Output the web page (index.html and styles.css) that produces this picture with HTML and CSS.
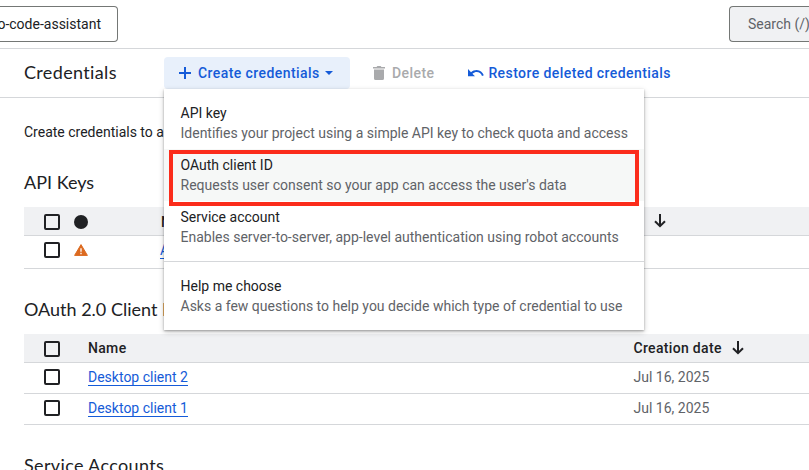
FILE: index.html
```html
<!DOCTYPE html>
<html lang="en">
<head>
<meta charset="utf-8">
<title>Credentials</title>
<link rel="stylesheet" href="styles.css">
</head>
<body>
<header class="topbar">
  <div class="project"><span class="project-name">o-code-assistant</span></div>
  <div class="search"><span class="search-label">Search (/)</span></div>
</header>
<div class="toolbar">
  <h1 class="title">Credentials</h1>
  <div class="create">
    <button class="create-btn">
      <svg width="14" height="14" viewBox="0 0 14 14"><path d="M7 1v12M1 7h12" stroke="currentColor" stroke-width="2"/></svg>
      <span>Create credentials</span>
      <svg class="caret" width="8" height="4" viewBox="0 0 8 4"><path d="M0 0h8L4 4z" fill="currentColor"/></svg>
    </button>
    <div class="menu">
      <div class="item"><div class="name">API key</div><div class="desc">Identifies your project using a simple API key to check quota and access</div></div>
      <div class="item active"><div class="name">OAuth client ID</div><div class="desc">Requests user consent so your app can access the user's data</div><div class="marker"></div></div>
      <div class="item"><div class="name">Service account</div><div class="desc">Enables server-to-server, app-level authentication using robot accounts</div></div>
      <div class="divider"></div>
      <div class="item"><div class="name">Help me choose</div><div class="desc">Asks a few questions to help you decide which type of credential to use</div></div>
    </div>
  </div>
  <button class="delete">
    <svg width="12" height="14" viewBox="0 0 12 14"><path d="M0 1h3.500L4.400 0h3.200l.9 1H12v1.600H0zM1 3.600h10v8.800q0 1.600-1.600 1.600H2.600Q1 14 1 12.400z" fill="currentColor"/></svg>
    <span>Delete</span>
  </button>
  <button class="restore">
    <svg width="16" height="8" viewBox="0 0 16 8"><path d="M0 0v7.200h7L4.400 4.700C6 3.500 7.200 3 8.700 3c2.400 0 4.500 1.500 5.300 3.900l1.800-.6C14.700 3.200 12 1 8.700 1 6.500 1 4.600 1.900 3 3.200z" fill="currentColor"/></svg>
    <span>Restore deleted credentials</span>
  </button>
</div>
<main class="content">
  <p class="intro">Create credentials to a</p>
  <h2 class="h-api">API Keys</h2>
  <div class="table keys">
    <div class="row head">
      <i class="box"></i>
      <i class="dot"></i>
      <span class="col-name">N</span>
      <svg class="arrow" width="12" height="14" viewBox="0 0 12 14"><path d="M6 0v12M1 7.200l5 5 5-5" fill="none" stroke="currentColor" stroke-width="2"/></svg>
    </div>
    <div class="row">
      <i class="box"></i>
      <svg class="warn" width="14" height="12" viewBox="0 0 14 12"><path d="M7 .6L13.400 11.400H.6z" fill="#dc6a20" stroke="#dc6a20" stroke-linejoin="round"/><path d="M7 4.200v3.600M7 8.800v1.400" stroke="#fff" stroke-width="1.300"/></svg>
      <a class="link">A</a>
    </div>
  </div>
  <h2 class="h-oauth">OAuth 2.0 Client I</h2>
  <div class="table clients">
    <div class="row head">
      <i class="box"></i>
      <span class="col-name">Name</span>
      <span class="col-date">Creation date</span>
      <svg class="arrow" width="12" height="14" viewBox="0 0 12 14"><path d="M6 0v12M1 7.200l5 5 5-5" fill="none" stroke="currentColor" stroke-width="2"/></svg>
    </div>
    <div class="row">
      <i class="box"></i>
      <div class="col-name"><a class="link">Desktop client 2</a></div>
      <span class="date">Jul 16, 2025</span>
    </div>
    <div class="row">
      <i class="box"></i>
      <div class="col-name"><a class="link">Desktop client 1</a></div>
      <span class="date">Jul 16, 2025</span>
    </div>
  </div>
  <h2 class="h-service">Service Accounts</h2>
</main>
</body>
</html>
```
FILE: styles.css
```css
* { box-sizing: border-box; }
html, body { height: 470px; overflow: hidden; }
body {
  margin: 0;
  background: #fff;
  color: #202124;
  font: 14px/20px Roboto, sans-serif;
}
svg { display: block; flex: none; }
button {
  border: 0;
  padding: 0;
  background: none;
  font: 500 14px/20px Roboto, sans-serif;
  letter-spacing: 0.42px;
  display: flex;
  align-items: center;
  white-space: nowrap;
}
.topbar {
  height: 49px;
  border-bottom: 1px solid #d5d7da;
  display: flex;
  justify-content: space-between;
  align-items: flex-start;
  padding-top: 6px;
  overflow: hidden;
}
.project, .search {
  height: 36px;
  border: 1px solid #747775;
  display: flex;
  align-items: center;
  white-space: nowrap;
}
.project {
  width: 118px;
  border-left: 0;
  border-radius: 0 4px 4px 0;
  justify-content: flex-end;
  padding-right: 16px;
  overflow: hidden;
}
.search {
  width: 80px;
  border-right: 0;
  border-radius: 4px 0 0 4px;
  background: #f0f1f3;
  color: #5f6368;
  padding-left: 18px;
}
.toolbar {
  height: 49px;
  border-bottom: 1px solid #d5d7da;
  display: flex;
  padding-left: 24px;
}
.title, h2 {
  margin: 0;
  font: 400 18px/24px Lato, sans-serif;
  white-space: nowrap;
}
.title { width: 140px; padding-top: 11px; letter-spacing: 0.35px; }
.create { position: relative; width: 186px; padding-top: 8px; }
.create-btn {
  width: 186px;
  height: 32px;
  padding-left: 14px;
  border-radius: 4px;
  background: #e8f0fb;
  color: #155bd8;
}
.create-btn span { margin-left: 6px; }
.caret { margin-left: 5px; }
.delete { margin: 8px 0 0 23px; height: 32px; color: #a9aaac; }
.delete span { margin-left: 7px; }
.restore { margin: 8px 0 0 34px; height: 32px; color: #155bd8; }
.restore span { margin-left: 4px; }
.menu {
  position: absolute;
  z-index: 2;
  top: 40px;
  left: 0;
  width: 480px;
  padding: 8px 0;
  background: #fff;
  box-shadow: 0 1px 2px rgba(0,0,0,.3), 0 2px 6px rgba(0,0,0,.2);
}
.item { position: relative; height: 52px; padding: 6px 16.5px; white-space: nowrap; }
.active { background: #f6f8f7; }
.desc { color: #5f6368; }
.divider { height: 1px; margin: 8px 0; background: #d5d7da; }
.marker {
  position: absolute;
  top: 1px;
  left: 5px;
  width: 470px;
  height: 56px;
  border: 4px solid #fb2c1b;
  z-index: 1;
}
.content { padding-left: 24px; }
.intro { margin: 0; padding-top: 24px; }
.h-api { padding: 28px 0 13px; }
.row { height: 33px; border-bottom: 1px solid #d5d7da; display: flex; align-items: center; padding-left: 20px; }
.keys .row { padding-bottom: 4px; }
.row.head { height: 29px; padding: 1px 0 0 20px; background: #f0f1f3; font-weight: 500; }
.box { flex: none; width: 16px; height: 16px; border: 2px solid #202124; border-radius: 2px; }
.dot { width: 14px; height: 14px; border-radius: 50%; background: #202124; margin-left: 14px; }
.warn { margin-left: 14px; }
.keys .col-name { width: 492px; margin-left: 73px; }
.keys .link { margin-left: 72px; }
.keys .arrow { margin: -2px 0 0 1px; }
.link { color: #155bd8; border-bottom: 1px solid #155bd8; line-height: 16px; }
.h-oauth { padding: 28px 0 13px; }
.clients .row:not(.head) { height: 31px; padding-bottom: 3px; }
.clients .col-name { width: 545.5px; margin-left: 28px; }
.clients .head span { margin-top: -1px; letter-spacing: 0.32px; }
.clients .arrow { margin: -2px 0 0 10px; }
.date { color: #5f6368; }
.h-service { padding-top: 28px; letter-spacing: 0.35px; }
```
